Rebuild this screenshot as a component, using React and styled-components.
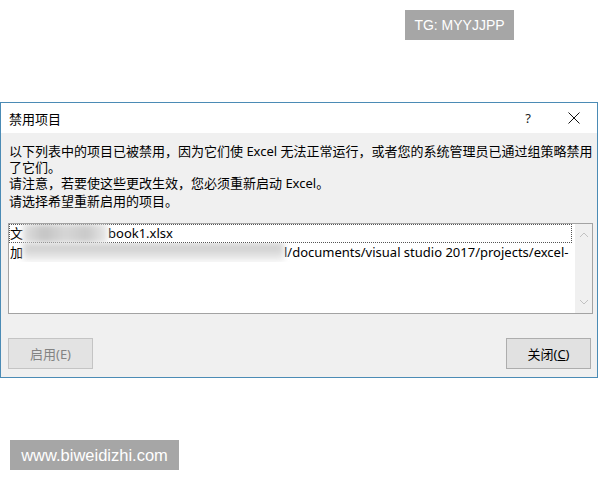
import React from 'react';
import styled, { createGlobalStyle } from 'styled-components';

const Global = createGlobalStyle`
  html, body {
    margin: 0;
    padding: 0;
    background: #ffffff;
  }
  body {
    font-family: "Noto Sans", "Noto Sans CJK SC", sans-serif;
  }
`;

const Page = styled.div`
  width: 600px;
  height: 480px;
  display: flex;
  flex-direction: column;
  padding-top: 10px;
  box-sizing: border-box;
  overflow: hidden;
`;

const Mark = styled.div`
  height: 30px;
  width: ${p => p.$w}px;
  background: #a6a6a6;
  color: #ffffff;
  font-family: "Liberation Sans", Arial, sans-serif;
  font-size: ${p => p.$size}px;
  display: flex;
  align-items: center;
  justify-content: center;
  align-self: ${p => (p.$right ? 'flex-end' : 'flex-start')};
  margin: ${p => p.$margin};
`;

const Dialog = styled.div`
  width: 598px;
  height: 276px;
  margin-top: 62px;
  box-sizing: border-box;
  border: 1px solid #4b8bb5;
  background: #f0f0f0;
  display: flex;
  flex-direction: column;
`;

const TitleBar = styled.div`
  height: 30px;
  background: #ffffff;
  display: flex;
  align-items: center;
  padding-left: 8px;
  font-size: 13px;
  color: #000;
`;

const Title = styled.div`
  flex: 1;
`;

const TitleButton = styled.div`
  width: ${p => p.$w}px;
  height: 30px;
  display: flex;
  align-items: center;
  justify-content: center;
  font-size: 13px;
  color: #222;
`;

const Body = styled.div`
  flex: 1;
  display: flex;
  flex-direction: column;
  padding: 10px 4px 7px 7px;
  font-size: 13px;
  color: #000;
`;

const Para = styled.div`
  padding-left: 1px;
  line-height: ${p => p.$lh}px;
  white-space: nowrap;
`;

const ListBox = styled.div`
  margin-top: 13px;
  height: 91px;
  box-sizing: border-box;
  border: 1px solid #a3a3a3;
  background: #ffffff;
  display: flex;
  overflow: hidden;
`;

const Items = styled.div`
  flex: 1;
  padding-right: 3px;
  overflow: hidden;
  min-width: 0;
`;

const Item = styled.div`
  height: 19px;
  line-height: 19px;
  padding-left: 1px;
  white-space: nowrap;
  overflow: hidden;
  display: flex;
  outline: ${p => (p.$focus ? '1px dotted #555' : 'none')};
  outline-offset: -1px;
`;

const Smudge = styled.span`
  display: inline-block;
  flex: none;
  width: ${p => p.$w}px;
  height: 19px;
  background: ${p => p.$bg};
  filter: blur(3px);
`;

const ScrollBar = styled.div`
  width: 17px;
  background: #f0f0f0;
  display: flex;
  flex-direction: column;
  justify-content: space-between;
  align-items: center;
  padding: 8px 0;
`;

const ButtonRow = styled.div`
  margin-top: 24px;
  padding-right: 2px;
  display: flex;
  justify-content: space-between;
`;

const Button = styled.div`
  width: ${p => p.$w}px;
  height: 31px;
  box-sizing: border-box;
  border: 1px solid ${p => (p.$disabled ? '#c4c4c4' : '#adadad')};
  background: ${p => (p.$disabled ? '#e3e3e3' : '#e1e1e1')};
  color: ${p => (p.$disabled ? '#838383' : '#000')};
  font-size: 13px;
  display: flex;
  align-items: center;
  justify-content: center;
`;

const Chevron = ({ up }) => (
  <svg width="10" height="6" viewBox="0 0 10 6">
    <path
      d={up ? 'M1 5 L5 1 L9 5' : 'M1 1 L5 5 L9 1'}
      fill="none"
      stroke="#c2c2c2"
      strokeWidth="1"
    />
  </svg>
);

export default function App() {
  return (
    <>
      <Global />
      <Page>
        <Mark $right $w={109} $size={14} $margin="0 86px 0 0">TG: MYYJJPP</Mark>
        <Dialog>
          <TitleBar>
            <Title>禁用项目</Title>
            <TitleButton $w={46}>?</TitleButton>
            <TitleButton $w={46}>
              <svg width="12" height="12" viewBox="0 0 12 12">
                <path d="M0.5 0.5 L11.5 11.5 M11.5 0.5 L0.5 11.5" stroke="#111" strokeWidth="1" />
              </svg>
            </TitleButton>
          </TitleBar>
          <Body>
            <Para $lh={16}>
              以下列表中的项目已被禁用，因为它们使 Excel 无法正常运行，或者您的系统管理员已通过组策略禁用
              <br />
              了它们。
            </Para>
            <Para $lh={17}>请注意，若要使这些更改生效，您必须重新启动 Excel。</Para>
            <Para $lh={18}>请选择希望重新启用的项目。</Para>
            <ListBox>
              <Items>
                <Item $focus>
                  文
                  <Smudge $w={85} $bg="linear-gradient(90deg, #e0e0e0 0%, #c4c4c4 25%, #d6d6d6 50%, #c9c9c9 75%, #eaeaea 100%)" />
                  book1.xlsx
                </Item>
                <Item>
                  加
                  <Smudge $w={261} $bg="linear-gradient(180deg, #cacaca 0%, #d8d8d8 45%, #f6f6f6 100%)" />
                  l/documents/visual studio 2017/projects/excel-
                </Item>
              </Items>
              <ScrollBar>
                <Chevron up />
                <Chevron />
              </ScrollBar>
            </ListBox>
            <ButtonRow>
              <Button $w={85} $disabled>启用(E)</Button>
              <Button $w={85}>
                关闭(<u>C</u>)
              </Button>
            </ButtonRow>
          </Body>
        </Dialog>
        <Mark $w={169} $size={16.5} $margin="62px 0 0 10px">www.biweidizhi.com</Mark>
      </Page>
    </>
  );
}
